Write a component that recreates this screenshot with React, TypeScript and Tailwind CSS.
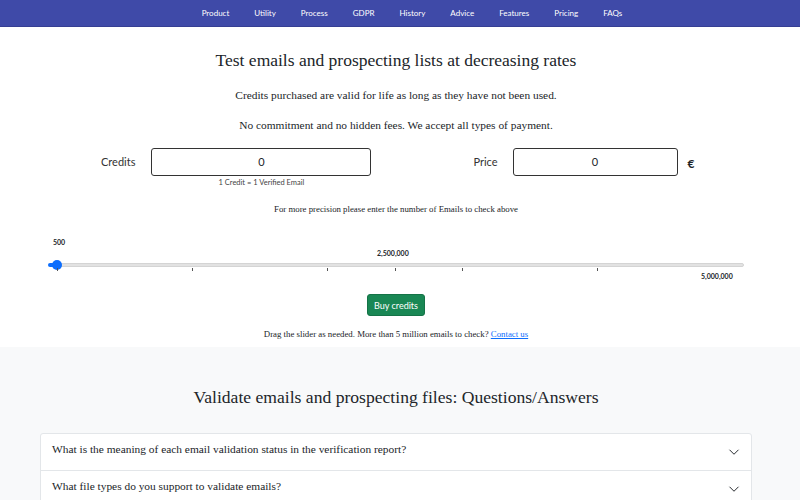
import React from "react";

const navItems = ["Product", "Utility", "Process", "GDPR", "History", "Advice", "Features", "Pricing", "FAQs"];

const ticks = [57, 192, 327, 395, 462, 597];

const faqs = [
  "What is the meaning of each email validation status in the verification report?",
  "What file types do you support to validate emails?",
];

const Chevron = () => (
  <svg width="12" height="12" viewBox="0 0 16 16" fill="none" stroke="#212529" strokeWidth="1.3">
    <path d="M2 5l6 6 6-6" />
  </svg>
);

const App = () => {
  return (
    <div className="w-[800px] h-[500px] overflow-hidden bg-white font-['Liberation_Serif',serif] text-[#212529]">
      <nav className="h-[27px] bg-[#3f4aa8] border-b border-[#363f93] flex justify-center items-center gap-[25px] pl-[24px] font-['Lato',sans-serif] text-[8px] text-white">
        {navItems.map((item) => (
          <span key={item}>{item}</span>
        ))}
      </nav>

      <div className="w-[792px]">
        <section className="flex flex-col items-center">
          <h1 className="mt-[21px] text-[17.5px] leading-[24px]">Test emails and prospecting lists at decreasing rates</h1>
          <p className="mt-[16px] text-[11.4px] leading-[14px]">Credits purchased are valid for life as long as they have not been used.</p>
          <p className="mt-[16px] text-[11.4px] leading-[14px]">No commitment and no hidden fees. We accept all types of payment.</p>

          <div className="mt-[16px] w-full flex items-start font-['Lato',sans-serif]">
            <span className="ml-[101px] mt-[6px] text-[11px] text-[#333]">Credits</span>
            <div className="ml-[16px] flex flex-col items-center">
              <div className="w-[220px] h-[28px] border border-[#333] rounded-[3px] flex items-center justify-center text-[11px]">0</div>
              <span className="mt-[1px] text-[7.5px] text-[#444]">1 Credit = 1 Verified Email</span>
            </div>
            <span className="ml-[102px] mt-[6px] text-[11px] text-[#333]">Price</span>
            <div className="ml-[15px] w-[165px] h-[28px] border border-[#333] rounded-[3px] flex items-center justify-center text-[11px]">0</div>
            <span className="ml-[10px] mt-[7px] text-[12px] font-bold">€</span>
          </div>

          <p className="mt-[15px] text-[8.8px] leading-[12px]">For more precision please enter the number of Emails to check above</p>
        </section>

        <div className="relative h-[55px] mt-[20px] font-['Lato',sans-serif] text-[7px] font-bold">
          <span className="absolute left-[53px] top-[2px]">500</span>
          <span className="absolute left-[377px] top-[13px]">2,500,000</span>
          <span className="absolute left-[701px] top-[36px]">5,000,000</span>
          <div className="absolute left-[50px] top-[28px] w-[694px] h-[4px] rounded-full bg-[#e2e2e2] border border-[#d4d4d4]" />
          <div className="absolute left-[48px] top-[28px] w-[10px] h-[4px] rounded-full bg-[#0d6efd]" />
          <div className="absolute left-[52px] top-[25px] w-[10px] h-[10px] rounded-full bg-[#0d6efd]" />
          {ticks.map((x) => (
            <div key={x} className="absolute top-[33px] w-px h-[3px] bg-[#555]" style={{ left: x }} />
          ))}
        </div>

        <div className="flex flex-col items-center">
          <button className="mt-[4px] h-[22px] px-[6px] rounded-[3px] bg-[#198754] border border-[#157347] text-white text-[9px] font-['Lato',sans-serif]">Buy credits</button>
          <p className="mt-[12px] text-[8.8px] leading-[12px]">
            Drag the slider as needed. More than 5 million emails to check?{" "}
            <a className="text-[#0d6efd] underline">Contact us</a>
          </p>
        </div>
      </div>

      <section className="mt-[7px] bg-[#f8f9fa] h-[200px]">
        <div className="w-[792px] px-[40px] flex flex-col">
          <h2 className="pt-[38px] text-center text-[17.6px] leading-[24px]">Validate emails and prospecting files: Questions/Answers</h2>
          <div className="mt-[24px] bg-white border border-[#e3e6e9] rounded-t-[3px]">
            {faqs.map((q, i) => (
              <div key={q} className={"h-[36px] flex items-center justify-between pl-[11px] pr-[11px] text-[11.4px] " + (i > 0 ? "border-t border-[#e3e6e9]" : "")}>
                <span className="mb-[5px]">{q}</span>
                <Chevron />
              </div>
            ))}
          </div>
        </div>
      </section>
    </div>
  );
};

export default App;
